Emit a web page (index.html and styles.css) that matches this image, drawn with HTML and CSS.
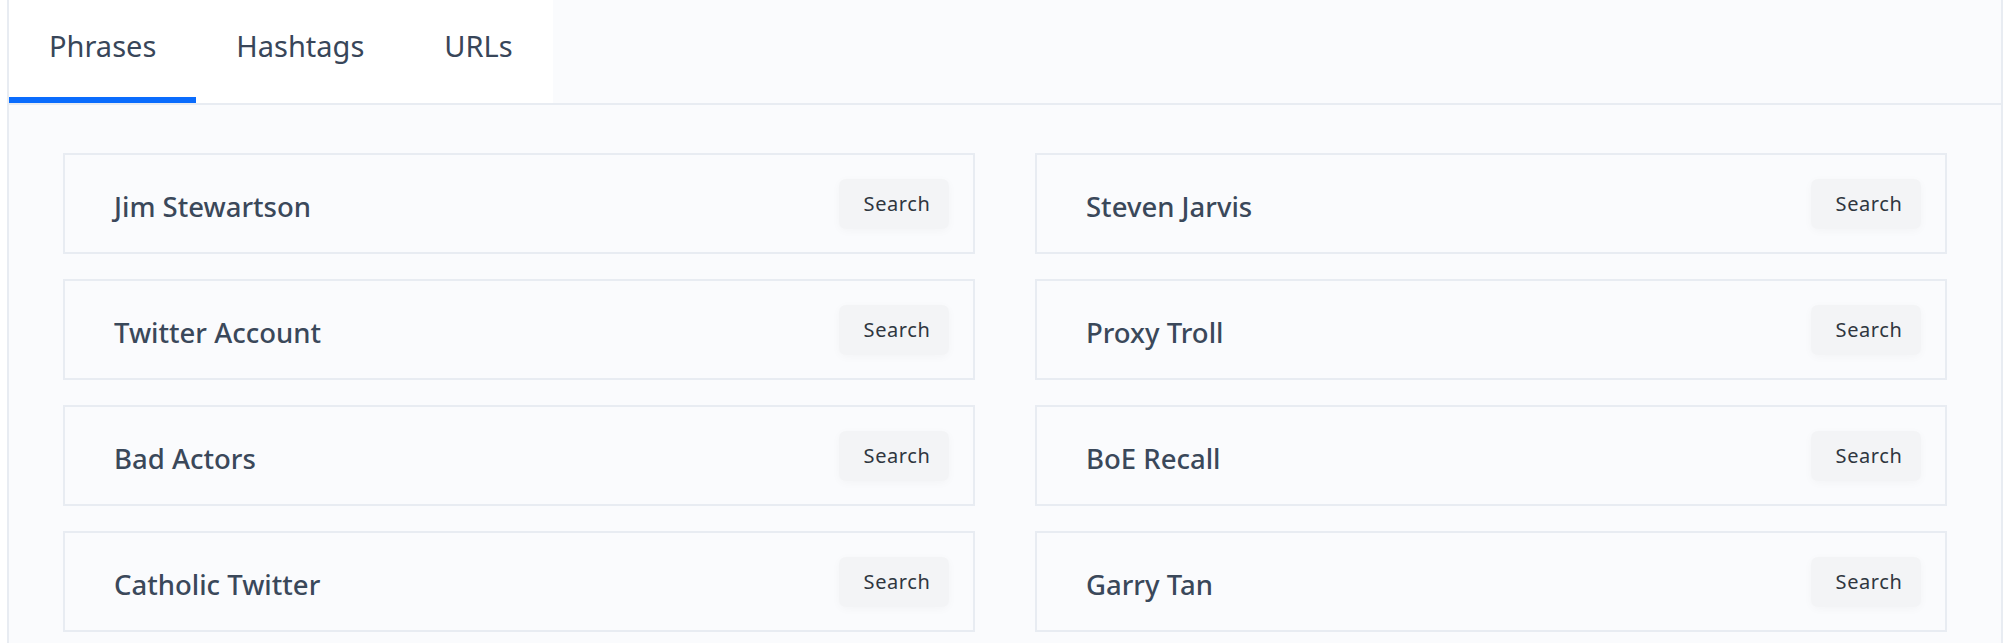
FILE: index.html
```html
<!DOCTYPE html>
<html>
<head>
<meta charset="utf-8">
<link rel="stylesheet" href="styles.css">
</head>
<body>
<div class="panel">
  <div class="tabs">
    <div class="tablist">
      <div class="tab active">Phrases</div>
      <div class="tab">Hashtags</div>
      <div class="tab">URLs</div>
    </div>
  </div>
  <div class="content">
    <div class="grid">
      <div class="card"><span class="label">Jim Stewartson</span><button class="btn">Search</button></div>
      <div class="card"><span class="label">Steven Jarvis</span><button class="btn">Search</button></div>
      <div class="card"><span class="label">Twitter Account</span><button class="btn">Search</button></div>
      <div class="card"><span class="label">Proxy Troll</span><button class="btn">Search</button></div>
      <div class="card"><span class="label">Bad Actors</span><button class="btn">Search</button></div>
      <div class="card"><span class="label">BoE Recall</span><button class="btn">Search</button></div>
      <div class="card"><span class="label">Catholic Twitter</span><button class="btn">Search</button></div>
      <div class="card"><span class="label">Garry Tan</span><button class="btn">Search</button></div>
    </div>
  </div>
</div>
</body>
</html>
```

FILE: styles.css
```css
* { box-sizing: border-box; }
html, body { margin: 0; padding: 0; background: #ffffff; }
body {
  font-family: "Noto Sans", "Open Sans", sans-serif;
  color: #344256;
  overflow: hidden;
  height: 643px;
}
.panel {
  margin-left: 7px;
  width: 1996px;
  border-left: 2px solid #e8ecf2;
  border-right: 2px solid #e8ecf2;
  background: #fafbfd;
  min-height: 643px;
}
.tabs {
  display: flex;
  border-bottom: 2px solid #e8ecf2;
  background: #fafbfd;
}
.tablist {
  display: flex;
  background: #ffffff;
}
.tab {
  height: 103px;
  padding: 26px 40px 0;
  font-size: 29px;
  font-weight: 400;
  color: #384659;
  border-bottom: 6px solid transparent;
}
.tab.active { border-bottom-color: #0a6cfd; }
.content {
  padding: 48px 54px 0;
}
.grid {
  display: grid;
  grid-template-columns: 1fr 1fr;
  column-gap: 60px;
  row-gap: 25px;
}
.card {
  height: 101px;
  border: 2px solid #e8ecf2;
  background: #fafbfd;
  display: flex;
  align-items: center;
  justify-content: space-between;
  padding: 0 24px 0 49px;
}
.label {
  font-size: 27.5px;
  font-weight: 500;
  color: #3a485a;
  padding-top: 6px;
}
.btn {
  width: 110px;
  height: 50px;
  border: none;
  border-radius: 7px;
  background: #f3f4f6;
  box-shadow: 0 2px 10px rgba(0, 0, 0, 0.03);
  font-family: "Noto Sans", "Open Sans", sans-serif;
  font-size: 20px;
  letter-spacing: 0.6px;
  color: #2f3640;
  padding: 0 0 0 6px;
}
```
